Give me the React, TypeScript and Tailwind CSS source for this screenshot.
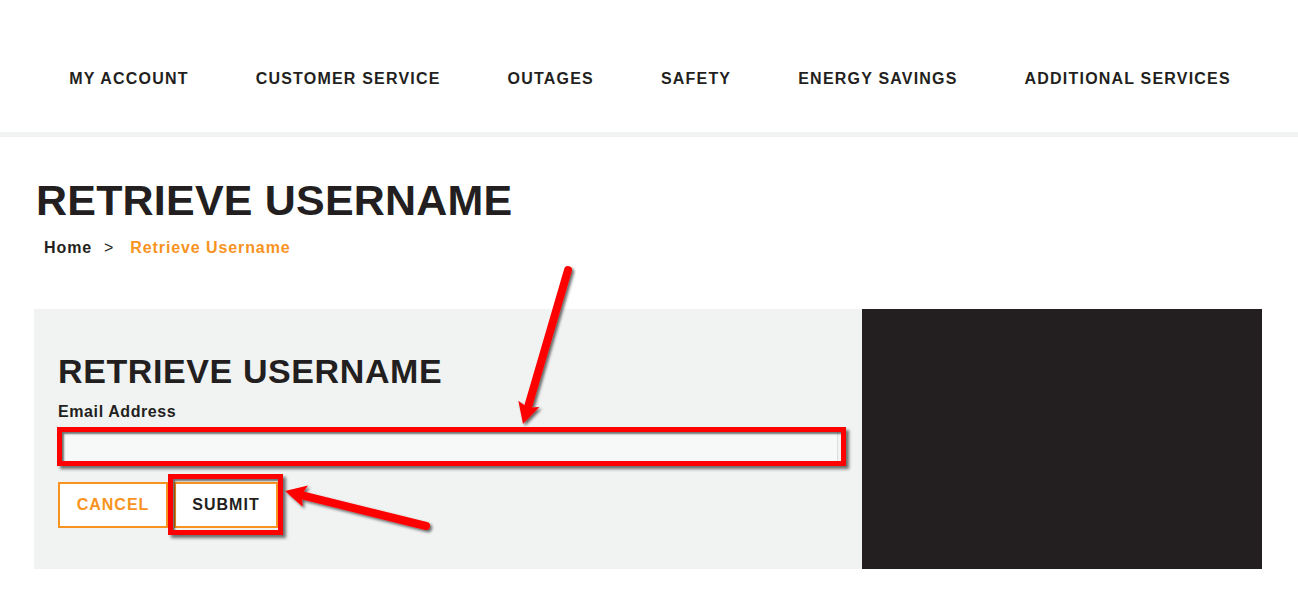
import React from "react"

const navItems = ["MY ACCOUNT", "CUSTOMER SERVICE", "OUTAGES", "SAFETY", "ENERGY SAVINGS", "ADDITIONAL SERVICES"]

function Arrow({ x1, y1, x2, y2 }: { x1: number; y1: number; x2: number; y2: number }) {
  const dx = x2 - x1
  const dy = y2 - y1
  const len = Math.hypot(dx, dy)
  const ux = dx / len
  const uy = dy / len
  const bx = x2 - ux * 21
  const by = y2 - uy * 21
  const px = -uy * 11
  const py = ux * 11
  return (
    <g filter="url(#shadow)">
      <line x1={x1} y1={y1} x2={bx + ux * 2} y2={by + uy * 2} stroke="#ff0000" strokeWidth={8} strokeLinecap="round" />
      <polygon points={`${x2},${y2} ${bx + px},${by + py} ${bx + ux * 4},${by + uy * 4} ${bx - px},${by - py}`} fill="#ff0000" />
    </g>
  )
}

export default function App() {
  return (
    <div className="relative min-h-[597px] w-full bg-white text-[#231f20] font-['Liberation_Sans',Arial,sans-serif]">
      {/* Header */}
      <header className="h-[137px] border-b-[5px] border-[#f1f3f3]">
        <nav className="flex justify-center gap-[67px] pt-[69px] pl-[2px] text-[16px] leading-[20px] font-bold tracking-[1.2px]">
          {navItems.map((item) => (
            <a key={item} href="#" className="whitespace-nowrap">
              {item}
            </a>
          ))}
        </nav>
      </header>

      <main className="ml-[34px] w-[1228px]">
        <h1 className="mt-[42px] ml-[2px] text-[43px] leading-[43px] font-bold tracking-[0.2px]">RETRIEVE USERNAME</h1>

        {/* Breadcrumb */}
        <div className="mt-[16px] ml-[10px] flex items-center text-[16px] leading-[20px] font-bold tracking-[0.9px]">
          <a href="#">Home</a>
          <span className="ml-[12px] font-normal">&gt;</span>
          <span className="ml-[16px] text-[#f7931e]">Retrieve Username</span>
        </div>

        <div className="mt-[51px] flex h-[260px]">
          {/* Form panel */}
          <div className="w-[828px] bg-[#f1f3f2] px-[24px] pt-[45px]">
            <h2 className="text-[34px] leading-[34px] font-bold tracking-[0.6px]">RETRIEVE USERNAME</h2>
            <label className="mt-[14px] block text-[16px] leading-[20px] font-bold tracking-[0.6px]">Email Address</label>
            <div className="relative mt-[7px]">
              <input type="email" className="block h-[36px] w-full border border-[#dcdede] bg-[#f7f8f8] outline-none" />
              <div className="pointer-events-none absolute -left-[1px] -right-[8px] -top-[2px] -bottom-[1px] border-[5px] border-[#ff0000] shadow-[3px_3px_3px_rgba(0,0,0,0.55),inset_2px_2px_2px_rgba(0,0,0,0.55)]" />
            </div>
            <div className="mt-[17px] flex gap-[6px]">
              <button className="h-[46px] w-[110px] border-2 border-[#f7931e] bg-white text-[16px] font-bold tracking-[1px] text-[#f7931e]">
                CANCEL
              </button>
              <div className="relative">
                <button className="h-[46px] w-[104px] border-2 border-[#f7931e] bg-white text-[16px] font-bold tracking-[1px] text-[#231f20]">
                  SUBMIT
                </button>
                <div className="pointer-events-none absolute -left-[6px] -right-[5px] -top-[8px] -bottom-[7px] border-[5px] border-[#ff0000] shadow-[3px_3px_3px_rgba(0,0,0,0.55),inset_2px_2px_2px_rgba(0,0,0,0.55)]" />
              </div>
            </div>
          </div>
          {/* Dark panel */}
          <div className="flex-1 bg-[#231f20]" />
        </div>
      </main>

      {/* Annotation arrows */}
      <svg className="pointer-events-none absolute left-0 top-0" width="1298" height="597">
        <defs>
          <filter id="shadow" x="-20%" y="-20%" width="140%" height="140%">
            <feDropShadow dx="2" dy="2" stdDeviation="1.5" floodColor="#000" floodOpacity="0.6" />
          </filter>
        </defs>
        <Arrow x1={568} y1={270} x2={523} y2={424} />
        <Arrow x1={426} y1={526} x2={285} y2={491} />
      </svg>
    </div>
  )
}
